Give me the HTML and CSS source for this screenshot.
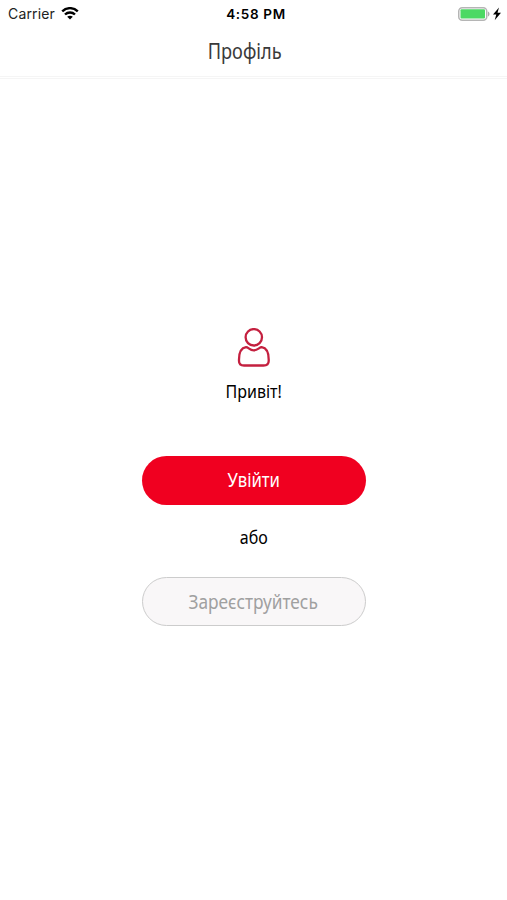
FILE: index.html
```html
<!DOCTYPE html>
<html lang="uk">
<head>
<meta charset="utf-8">
<title>Профіль</title>
<link rel="stylesheet" href="styles.css">
</head>
<body>
<div class="status">
  <div class="carrier"><span class="carrier-text">Carrier</span>
    <svg class="wifi" width="18" height="13" viewBox="0 0 18 13" fill="none" stroke="#000" stroke-width="2.4"><path d="M1.200 4.300C5.600.1 12.400.1 16.800 4.300M4 7.500c2.800-2.700 7.200-2.700 10 0"/><path d="M9 12.500 6.200 9.700c1.500-1.400 4.100-1.400 5.600 0z" fill="#000" stroke="none"/></svg>
  </div>
  <div class="time">4:58 PM</div>
  <div class="power">
    <svg width="44" height="14" viewBox="0 0 44 14"><rect x=".75" y=".75" width="28" height="12.500" rx="3.500" fill="#fff" stroke="#b5b5b5" stroke-width="1.500"/><rect x="2.500" y="2.200" width="24.500" height="9.300" rx="1" fill="#4cd964"/><path d="M30 4.500c2 .8 2 4.200 0 5z" fill="#aaa"/><path d="M41 .5l-6 7.100h3.300L36.700 13.200l6.300-7.400h-3.500z" fill="#000"/></svg>
  </div>
</div>
<header class="header"><h1 class="title">Профіль</h1></header>
<main class="content">
  <svg class="avatar" width="34" height="40" viewBox="0 0 34 40" fill="none" stroke="#c4203f" stroke-width="2.300" stroke-linejoin="round"><circle cx="16.800" cy="9.300" r="8.200"/><path d="M9 19.200C4.100 20 2 25 2 31.500V33Q2 37.500 7 37.500H26.500Q31.700 37.500 31.700 33V31.500C31.700 25 29.500 20 24.700 19.200C22.500 19 21 22.400 16.800 22.400S11.200 19 9 19.200Z"/></svg>
  <p class="hello">Привіт!</p>
  <button class="btn primary"><span class="login">Увійти</span></button>
  <p class="or">або</p>
  <button class="btn secondary"><span class="register">Зареєструйтесь</span></button>
</main>
</body>
</html>
```
FILE: styles.css
```css
* { box-sizing: border-box; }
body { margin: 0; height: 900px; background: #fff; color: #000; font-family: "Noto Sans", sans-serif; overflow: hidden; }
h1, p { margin: 0; font-weight: 400; white-space: nowrap; }
.status { height: 26px; display: grid; grid-template-columns: 1fr auto 1fr; align-items: center; padding: 0 5px 0 8px; font-family: Inter, sans-serif; font-size: 14px; }
.carrier { display: flex; align-items: center; gap: 6px; letter-spacing: .15px; color: #222; }
.carrier-text { line-height: 26px; padding-top: 1px; }
.time { font-size: 13.5px; font-weight: 600; letter-spacing: .65px; padding: 1px 0 0 2px; line-height: 26px; }
.power { display: flex; justify-content: flex-end; }
.header { height: 53px; display: flex; justify-content: center; border-bottom: 1px solid #f5f5f5; padding-right: 18px; background: linear-gradient(#f5f5f5, #f5f5f5) 0 50px / 100% 1px no-repeat; }
.title { font-size: 21px; line-height: 51px; height: 51px; transform: scaleX(.865); color: #3a3a3a; }
.content { display: flex; flex-direction: column; align-items: center; padding-top: 249px; }
.avatar { display: block; }
.hello, .or { font-size: 18px; line-height: 24px; transform: scaleX(.89); }
.hello { margin-top: 11px; }
.btn { width: 224px; height: 49px; border-radius: 25px; padding: 0; font: 19px "Noto Sans", sans-serif; }
.btn span { display: inline-block; }
.primary { margin-top: 53px; border: 0; background: #f00020; color: #fff; }
.login { transform: translateY(-1px) scaleX(.88); }
.or { margin-top: 20px; }
.secondary { margin-top: 28px; border: 1px solid #ccc; background: #f9f7f8; color: #a0a0a0; }
.register { transform: scaleX(.91); }
```
